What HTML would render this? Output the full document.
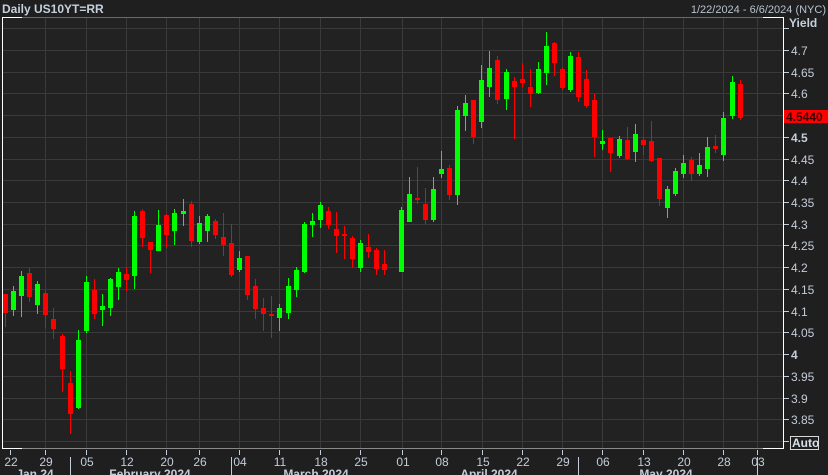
<!DOCTYPE html>
<html><head><meta charset="utf-8"><style>
html,body{margin:0;padding:0;background:#1f1f20;width:828px;height:475px;overflow:hidden;font-family:"Liberation Sans",sans-serif}
</style></head><body>
<svg id="s" width="828" height="475" xmlns="http://www.w3.org/2000/svg" style="position:absolute;left:0;top:0">
<rect x="0" y="0" width="828" height="475" fill="#1f1f20"/>
<rect x="2" y="17" width="781" height="432" fill="#222222"/>
<g id="grid" stroke="#3a3a3a" stroke-width="1"></g>
<line x1="2" y1="17.5" x2="783" y2="17.5" stroke="#6a6a6a"/>
<line x1="2" y1="448.5" x2="783" y2="448.5" stroke="#8a8a8a"/>
<line x1="2.5" y1="17" x2="2.5" y2="449" stroke="#ffffff"/>
<line x1="2" y1="17.5" x2="22" y2="17.5" stroke="#ffffff"/>
<line x1="2" y1="448.5" x2="22" y2="448.5" stroke="#ffffff"/>
<line x1="783.5" y1="17" x2="783.5" y2="449" stroke="#ffffff"/>
<line x1="763" y1="17.5" x2="784" y2="17.5" stroke="#ffffff"/>
<line x1="763" y1="448.5" x2="784" y2="448.5" stroke="#ffffff"/>
<g id="c"></g>
<g id="ax" font-size="12" fill="#c3ccd8"></g>
<text x="2" y="13" font-size="12" font-weight="bold" fill="#c6d0dc">Daily US10YT=RR</text>
<text x="826" y="13" font-size="11" fill="#b8c2ce" text-anchor="end">1/22/2024 - 6/6/2024 (NYC)</text>
<text x="789" y="27" font-size="12" font-weight="bold" fill="#c6d0dc">Yield</text>
<rect x="784" y="110" width="44" height="13" fill="#ff0000"/>
<text x="786" y="121" font-size="12" font-weight="bold" fill="#3a0000">4.5440</text>
<rect x="790.5" y="436.5" width="28" height="13" fill="none" stroke="#d8d8d8"/>
<text x="792" y="447" font-size="12" font-weight="bold" fill="#d8e0ea">Auto</text>
</svg>
<script>
var NS="http://www.w3.org/2000/svg";
function el(p,t,a,txt){var e=document.createElementNS(NS,t);for(var k in a)e.setAttribute(k,a[k]);if(txt!=null)e.textContent=txt;p.appendChild(e);return e;}
var g=document.getElementById('grid'),ax=document.getElementById('ax'),c=document.getElementById('c');
function Y(v){return 50+(4.7-v)*434.4;}
for(var i=0;i<=19;i++){var v=4.75-i*0.05;var y=Math.round(Y(v))+0.5;if(y>18&&y<448)el(g,'line',{x1:3,y1:y,x2:783,y2:y});
 if(y>18&&y<448){el(ax,'line',{x1:784,y1:y,x2:789,y2:y,stroke:'#c3ccd8'});
 var lab=(Math.round(v*100)/100).toString();
 if(v<4.74&&v>3.82&&Math.abs(v-4.55)>0.01){var b=(lab=='4'||lab=='4.5');el(ax,'text',{x:791,y:y+4.5,'font-weight':b?'bold':'normal'},lab);}}}
var xs=[[10,'22'],[45,'29'],[86,'05'],[126,'12'],[166,'20'],[199,'26'],[239,'04'],[279,'11'],[320,'18'],[360,'25'],[402,'01'],[441,'08'],[482,'15'],[522,'22'],[562,'29'],[602,'06'],[643,'13'],[683,'20'],[723,'28'],[757,'03']];
xs.forEach(function(d,i){if(i>0&&d[0]<783)el(g,'line',{x1:d[0]+0.5,y1:18,x2:d[0]+0.5,y2:448});
 el(ax,'line',{x1:d[0]+0.5,y1:450,x2:d[0]+0.5,y2:455,stroke:'#c3ccd8'});
 el(ax,'text',{x:d[0]+1,y:466,'text-anchor':'middle'},d[1]);});
[70,231,578,757].forEach(function(x){el(ax,'line',{x1:x+0.5,y1:457,x2:x+0.5,y2:475,stroke:'#c3ccd8'});});
[[35,'Jan 24'],[150,'February 2024'],[316,'March 2024'],[489,'April 2024'],[666,'May 2024']].forEach(function(m){el(ax,'text',{x:m[0],y:478,'text-anchor':'middle','font-weight':'bold'},m[1]);});
var C=[
[5.3,294,327,294,313,0],[13.3,286,316,291,310,1],[21.3,271,317,276,296,1],[29.3,268,302,273,297,0],[37.3,281,314,284,305,1],[45.3,290,328,293,315,0],[53.3,308,339,319,329,0],[62,334,392,336,369,0],[70.3,371,434,383,414,0],[78.3,330,409,340,408,1],[86.3,276,333,282,331,1],[94.3,279,319,290,314,0],[102.3,294,326,306,310,1],[110.3,278,316,279,308,1],[118.3,268,300,272,287,1],[126.3,267,291,274,280,0],[134.3,211,289,216,276,1],[142.3,209,247,211,238,0],[150.3,242,273,242,250,0],[158.3,210,251,225,251,1],[166.3,214,248,215,235,0],[174.3,209,245,213,231,1],[183.3,199,226,211,214,1],[191.3,201,247,204,241,0],[199.3,216,244,223,242,1],
[207.3,214,242,216,231,1],[215.3,219,239,221,235,0],[223.3,213,256,237,245,0],[231.3,224,277,243,275,0],[239.3,251,272,258,270,1],[247.3,256,300,256,295,0],[255.3,279,319,286,309,0],[263.3,298,331,308,314,0],[271.3,296,338,314,316,0],[279.3,304,331,308,318,1],[288.3,278,319,286,313,1],[296.3,267,297,270,290,1],[304.3,222,273,224,272,1],[312.3,213,237,221,225,1],[320.3,202,228,205,220,1],[328.3,207,229,211,225,0],[336.3,212,253,229,236,0],[344.3,226,259,234,236,0],[352.3,236,268,238,259,0],[360.3,240,272,243,268,1],[368.3,234,258,247,252,0],[376.3,248,275,250,269,0],[384.3,250,275,264,270,0],
[401.3,207,272,210,272,1],[409.3,177,222,194,222,1],[417.3,167,204,198,200,0],[425.3,188,224,204,220,0],[433.3,177,222,189,220,1],[441.3,151,178,169,174,1],[449.3,165,200,168,195,0],[457.3,106,205,110,195,1],[465.3,95,131,103,116,1],[473.3,100,144,100,137,0],[481.3,65,128,80,122,1],[489.3,51,97,68,87,1],[497.3,56,104,60,100,0],[506.3,69,110,72,99,1],[514.3,77,139,81,87,0],[522.3,63,88,79,83,0],[530.3,69,107,87,94,0],[538.3,62,94,69,93,1],[546.3,32,85,46,73,1],[554.3,42,76,43,63,0],[562.3,67,90,69,88,0],[570.3,52,92,56,90,1],[578.3,52,102,57,97,0],[586.3,70,108,79,106,0],[594.3,94,157,100,137,0],[602.3,130,150,141,144,1],
[610.3,138,172,138,153,0],[619.3,136,158,139,156,1],[627.3,127,160,140,159,0],[635.3,124,162,134,152,1],[643.3,137,155,140,145,0],[651.3,121,162,141,161,0],[659.3,158,206,158,199,0],[667.3,186,218,189,208,1],[675.3,168,196,171,194,1],[683.3,155,178,163,174,1],[691.3,157,181,160,174,0],[699.3,153,176,165,174,1],[707.3,137,177,147,169,1],[715.3,135,153,146,149,0],[723.3,112,161,118,155,1],[732.3,76,119,82,116,1],[740.3,80,120,84,118,0]];
C.forEach(function(k){var col=k[5]?'#00ff00':'#ff0000';var x=Math.round(k[0]);
 el(c,'rect',{x:x,y:k[1],width:1,height:k[2]-k[1],fill:col});
 el(c,'rect',{x:x-2,y:k[3],width:5,height:Math.max(2,k[4]-k[3]),fill:col});});
</script>
</body></html>
